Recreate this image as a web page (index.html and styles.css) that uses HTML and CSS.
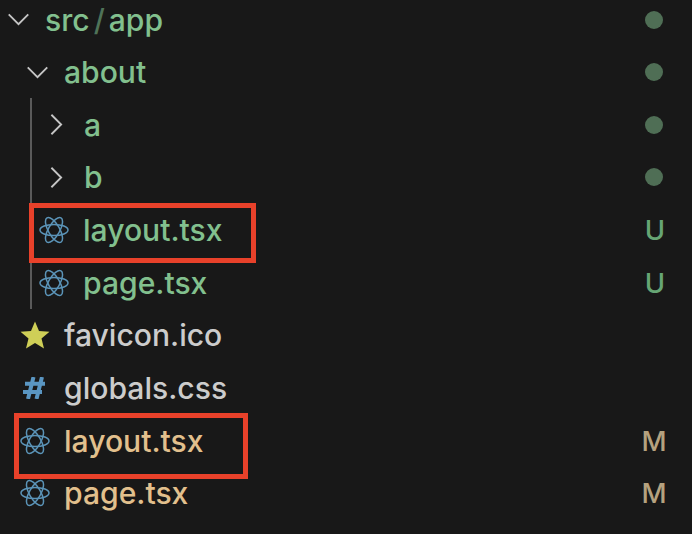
FILE: index.html
```html
<!DOCTYPE html>
<html lang="en">
<head>
    <meta charset="UTF-8">
    <meta name="viewport" content="width=device-width, initial-scale=1.0">
    <title>Explorer</title>
    <link rel="stylesheet" href="styles.css">
</head>
<body>
    <svg class="icon-defs" width="0" height="0">
        <symbol id="react" viewBox="0 0 30 28">
            <g fill="none" stroke="#5b94b8" stroke-width="1.5">
                <ellipse cx="15" cy="14" rx="14" ry="5.6"/>
                <ellipse cx="15" cy="14" rx="14" ry="5.6" transform="rotate(60 15 14)"/>
                <ellipse cx="15" cy="14" rx="14" ry="5.6" transform="rotate(120 15 14)"/>
            </g>
        </symbol>
        <symbol id="chevron-down" viewBox="0 0 24 14">
            <path d="M1.5 1.5 L12 12 L22.5 1.5" fill="none" stroke="#c5c5c5" stroke-width="2"/>
        </symbol>
        <symbol id="chevron-right" viewBox="0 0 14 24">
            <path d="M1.5 1.5 L12 12 L1.5 22.5" fill="none" stroke="#c5c5c5" stroke-width="2"/>
        </symbol>
    </svg>

    <div class="tree">
        <!-- src/app folder -->
        <div class="row depth-0 untracked">
            <span class="twist"><svg class="chev-down"><use href="#chevron-down"/></svg></span>
            <span class="label">src<span class="sep">/</span>app</span>
            <span class="dot"></span>
        </div>
        <div class="row depth-1 untracked">
            <span class="twist"><svg class="chev-down"><use href="#chevron-down"/></svg></span>
            <span class="label">about</span>
            <span class="dot"></span>
        </div>

        <!-- children of about -->
        <div class="group">
            <div class="guide"></div>
            <div class="row depth-2 untracked">
                <span class="twist"><svg class="chev-right"><use href="#chevron-right"/></svg></span>
                <span class="label">a</span>
                <span class="dot"></span>
            </div>
            <div class="row depth-2 untracked">
                <span class="twist"><svg class="chev-right"><use href="#chevron-right"/></svg></span>
                <span class="label">b</span>
                <span class="dot"></span>
            </div>
            <div class="row depth-2 file untracked">
                <span class="file-icon"><svg class="react"><use href="#react"/></svg></span>
                <span class="label">layout.tsx</span>
                <span class="badge">U</span>
                <div class="mark mark-inner"></div>
            </div>
            <div class="row depth-2 file untracked">
                <span class="file-icon"><svg class="react"><use href="#react"/></svg></span>
                <span class="label">page.tsx</span>
                <span class="badge">U</span>
            </div>
        </div>

        <div class="row depth-1 file plain">
            <span class="file-icon">
                <svg class="star" viewBox="0 0 30 28"><path d="M15 0.5 L19 10 L29.5 10.8 L21.5 17.5 L24 27.5 L15 22 L6 27.5 L8.5 17.5 L0.5 10.8 L11 10 Z" fill="#cfcf57"/></svg>
            </span>
            <span class="label">favicon.ico</span>
        </div>
        <div class="row depth-1 file plain">
            <span class="file-icon">
                <svg class="hash" viewBox="0 0 22 22"><path d="M10.5 0 L5 22 M19 0 L13.5 22 M2 6.7 H22 M0 15 H19" fill="none" stroke="#5a96c2" stroke-width="4"/></svg>
            </span>
            <span class="label">globals.css</span>
        </div>
        <div class="row depth-1 file modified">
            <span class="file-icon"><svg class="react"><use href="#react"/></svg></span>
            <span class="label">layout.tsx</span>
            <span class="badge">M</span>
            <div class="mark mark-outer"></div>
        </div>
        <div class="row depth-1 file modified">
            <span class="file-icon"><svg class="react"><use href="#react"/></svg></span>
            <span class="label">page.tsx</span>
            <span class="badge">M</span>
        </div>
    </div>
</body>
</html>
```

FILE: styles.css
```css
* {
    margin: 0;
    padding: 0;
    box-sizing: border-box;
}
html, body {
    height: 100%;
    overflow: hidden;
}
body {
    background-color: #181818;
    font-family: Inter, "Liberation Sans", sans-serif;
    font-size: 30.1px;
}
.icon-defs {
    display: block;
}
.tree {
    margin-top: -6.8px;
}
.row {
    position: relative;
    display: flex;
    align-items: center;
    height: 52.65px;
}
.depth-0 {
    padding-left: 7px;
}
.depth-1 {
    padding-left: 26px;
}
.depth-2 {
    padding-left: 46px;
}
.file.depth-1 {
    padding-left: 20px;
}
.file.depth-2 {
    padding-left: 39px;
}
.twist {
    display: flex;
    width: 38px;
    flex-shrink: 0;
}
.chev-down {
    width: 23px;
    height: 13px;
}
.chev-right {
    width: 13px;
    height: 23px;
    margin-left: 4px;
}
.file-icon {
    display: flex;
    justify-content: flex-start;
    align-items: center;
    width: 44px;
    flex-shrink: 0;
}
.react {
    width: 30px;
    height: 28px;
}
.star {
    width: 30px;
    height: 28px;
}
.hash {
    width: 22px;
    height: 22px;
    margin-left: 3px;
}
.label {
    flex: 1;
    white-space: nowrap;
    font-weight: 450;
}
.sep {
    color: #4f7358;
    padding: 0 4px;
}
.untracked .label {
    color: #82c08e;
}
.plain .label {
    color: #cccccc;
}
.modified .label {
    color: #e2c08d;
}
.dot {
    width: 18px;
    height: 18px;
    margin-right: 29px;
    border-radius: 50%;
    background-color: #4f6e55;
}
.badge {
    width: 32px;
    margin-right: 21px;
    text-align: center;
    font-size: 27.5px;
    font-weight: 500;
}
.modified .badge {
    margin-right: 22px;
}
.untracked .badge {
    color: #66a574;
}
.modified .badge {
    color: #b5a27f;
}
.group {
    position: relative;
}
.guide {
    position: absolute;
    left: 30px;
    top: 0;
    bottom: 0;
    width: 2px;
    background-color: #5a5a5a;
}
/* red annotation boxes */
.mark {
    position: absolute;
    border: 5px solid #e8412a;
    pointer-events: none;
}
.mark-inner {
    left: 29px;
    top: -1px;
    width: 227px;
    height: 60px;
}
.mark-outer {
    left: 14px;
    top: -1px;
    width: 234px;
    height: 66px;
}
```
